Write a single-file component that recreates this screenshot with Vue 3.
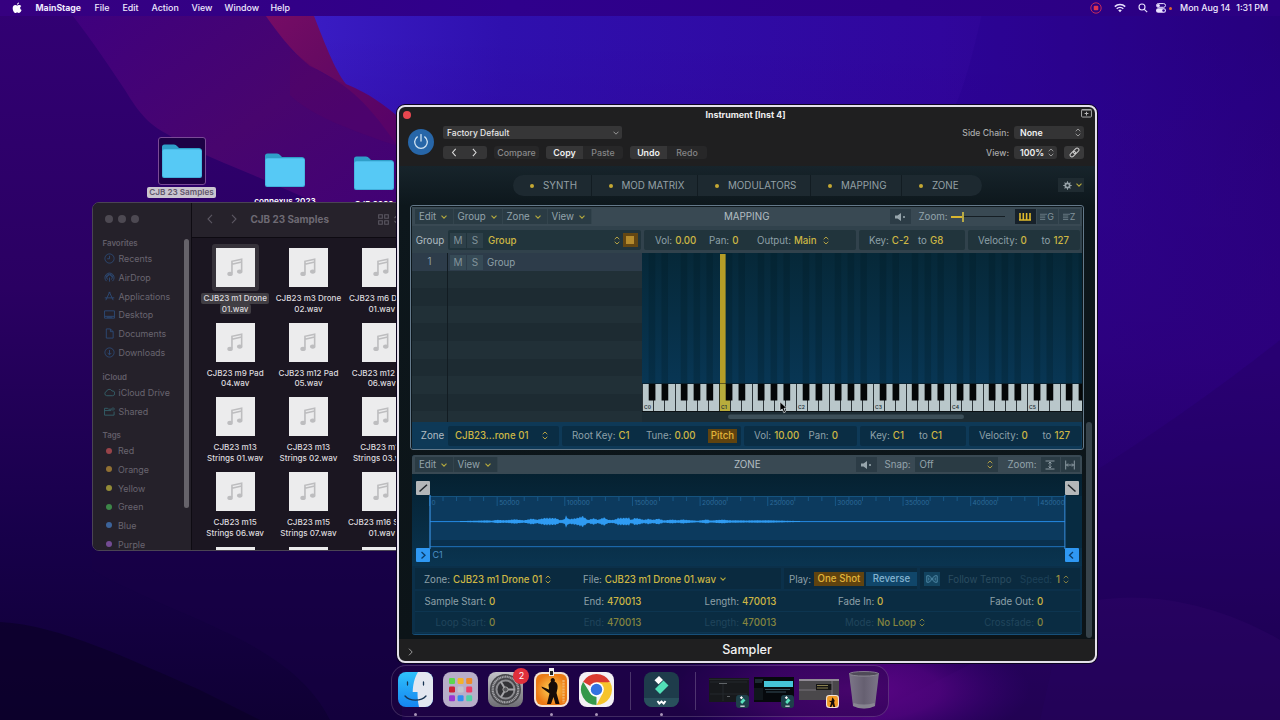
<template>
  <div class="desktop">
    <svg class="wallpaper" viewBox="0 0 1280 720" preserveAspectRatio="none">
      <defs>
        <linearGradient id="base" x1="0" y1="0" x2="0" y2="1">
          <stop offset="0" stop-color="#320074" />
          <stop offset=".4" stop-color="#2a0062" />
          <stop offset=".75" stop-color="#17004a" />
          <stop offset="1" stop-color="#0f0034" />
        </linearGradient>
        <linearGradient id="right" x1="0" y1="0" x2="1" y2="0">
          <stop offset="0" stop-color="#3a1cc4" />
          <stop offset=".2" stop-color="#2f10ae" />
          <stop offset=".65" stop-color="#30069c" />
          <stop offset="1" stop-color="#280078" />
        </linearGradient>
        <linearGradient id="fade" x1="0" y1="0" x2="0" y2="1">
          <stop offset=".05" stop-color="#2e0090" stop-opacity="0" />
          <stop offset=".5" stop-color="#2c007c" stop-opacity=".85" />
          <stop offset="1" stop-color="#1a0048" />
        </linearGradient>
        <linearGradient id="band" x1="0" y1="0" x2="1" y2="1">
          <stop offset="0" stop-color="#3e0080" />
          <stop offset=".5" stop-color="#48056e" />
          <stop offset="1" stop-color="#3f0078" />
        </linearGradient>
        <linearGradient id="red" x1="0" y1="0" x2="1" y2="1">
          <stop offset="0" stop-color="#7a0c66" />
          <stop offset=".4" stop-color="#680a62" />
          <stop offset="1" stop-color="#52026c" />
        </linearGradient>
        <radialGradient id="glow" cx=".5" cy=".5" r=".5">
          <stop offset="0" stop-color="#5e0588" />
          <stop offset=".5" stop-color="#520480" stop-opacity=".8" />
          <stop offset="1" stop-color="#3c0078" stop-opacity="0" />
        </radialGradient>
      </defs>
      <rect width="1280" height="720" fill="url(#base)" />
      <path d="M60 0C85 30 105 60 125 90C140 115 150 125 167 134C200 155 230 165 260 178C300 196 340 210 420 260V0Z" fill="url(#band)" />
      <path d="M255 0C275 30 290 50 310 66C350 85 370 105 400 150V0Z" fill="url(#red)" />
      <path d="M290 95C310 115 350 130 400 147V115C380 100 365 90 345 84C320 75 305 60 290 50Z" fill="#5c0464" opacity=".3" />
      <path d="M308 0C325 45 335 70 346 84C370 94 385 105 402 120V720H1280V0Z" fill="url(#right)" />
      <path d="M308 0C325 45 335 70 346 84C370 94 385 105 402 120V720H1280V0Z" fill="url(#fade)" />
      <path d="M985 0C970 70 960 100 948 120H1280V0Z" fill="#25008a" opacity=".3" />
      <path d="M1097 470C1160 430 1230 380 1280 340V720H1040Z" fill="#22005e" opacity=".3" />
      <path d="M1097 600C1160 590 1230 610 1280 640V720H860Z" fill="#34056c" opacity=".3" />
      <path d="M92 550H397V662H900L860 720H330C290 640 180 620 92 570Z" fill="#180046" opacity=".5" />
      <path d="M0 622C60 625 130 660 200 690L260 720H0Z" fill="#0b0028" opacity=".7" />
      <ellipse cx="850" cy="690" rx="180" ry="62" fill="url(#glow)" />
    </svg>

    <header class="menubar">
      <svg class="apple" viewBox="0 0 20 24"><path fill="#fff" d="M14 1c.2 2-1.700 4.600-4 4.500C9.700 3.400 12 1.200 14 1zM10.300 7c1 0 2.300-1.200 4.300-1.200 1.300 0 3 .8 3.900 2.200-3.300 2-2.900 6.600.6 8.200-.8 2.400-2.700 5.800-4.900 5.800-1.500 0-1.900-.9-3.700-.9s-2.400.9-3.700.9C4.400 22 1.400 17 1.400 12.400c0-4.100 2.600-6.400 5.100-6.400 1.700 0 2.900 1 3.800 1z" /></svg>
      <b class="m-app">MainStage</b>
      <span class="m-file">File</span>
      <span class="m-edit">Edit</span>
      <span class="m-action">Action</span>
      <span class="m-view">View</span>
      <span class="m-window">Window</span>
      <span class="m-help">Help</span>
      <div class="status">
        <svg class="rec" viewBox="0 0 12 12"><circle cx="6" cy="6" r="5.200" fill="none" stroke="#c22a5c" stroke-width="1" /><rect x="3.700" y="3.700" width="4.600" height="4.600" rx="1" fill="#e0344f" /></svg>
        <svg class="wifi" viewBox="0 0 12 10"><g fill="none" stroke="#e9e2ff" stroke-width="1.500"><path d="M.8 3.600C3.700.7 8.300.7 11.200 3.600" /><path d="M2.700 5.800c1.900-1.800 4.700-1.800 6.600 0" /></g><path d="M4.200 7.300c1-1 2.600-1 3.600 0L6 9.200z" fill="#e9e2ff" /></svg>
        <svg class="search" viewBox="0 0 10 10"><circle cx="4" cy="4" r="3" fill="none" stroke="#e9e2ff" stroke-width="1.100" /><path d="M6.300 6.300L9.200 9.200" stroke="#e9e2ff" stroke-width="1.200" /></svg>
        <svg class="control" viewBox="0 0 10 10"><rect x=".5" y=".6" width="9" height="3.700" rx="1.850" fill="none" stroke="#e9e2ff" /><circle cx="2.400" cy="2.400" r="1.500" fill="#e9e2ff" /><rect x="0" y="5.300" width="10" height="4.500" rx="2.200" fill="#e9e2ff" /><circle cx="7.600" cy="7.500" r="1.300" fill="#2d0090" /></svg>
        <i class="orange-dot"></i>
        <span class="date">Mon Aug 14</span>
        <span>1:31 PM</span>
      </div>
    </header>

    <div v-for="f in folders" :key="f.name" class="folder" :class="f.cls">
      <div class="folder-box">
        <svg viewBox="0 0 40 34">
          <path d="M0 3Q0 .5 2.500.5H12Q14 .5 15 2L17 4H37Q39.500 4 39.500 6.500V12H0Z" fill="#2f9fc9" />
          <rect x="0" y="5" width="40" height="29" rx="2" fill="#42aedb" />
          <rect x=".7" y="5.500" width="38.600" height="27.500" rx="1.800" fill="#56c9f5" />
        </svg>
      </div>
      <span>{{ f.name }}</span>
    </div>

    <section class="finder">
      <aside>
        <div class="lights"><i></i><i></i><i></i></div>
        <div v-for="s in sidebar" :key="s.title" class="side-group">
          <h4>{{ s.title }}</h4>
          <div v-for="item in s.items" :key="item.name" class="side-item">
            <svg v-if="item.icon" viewBox="0 0 12 12" :class="{ teal: s.title === 'iCloud' }"><path :d="item.icon" /></svg>
            <i v-else :class="'tag-' + item.name.toLowerCase()"></i>
            <span>{{ item.name }}</span>
          </div>
        </div>
        <div class="side-scroll"></div>
      </aside>
      <main>
        <div class="finder-bar">
          <svg class="nav" viewBox="0 0 32 10"><path d="M5 .8L1 5l4 4.200M25 .8L29 5l-4 4.200" /></svg>
          <b>CJB 23 Samples</b>
          <svg class="grid4" viewBox="0 0 11 11"><path d="M.7.700H4.300V4.300H.7zM6.700.700H10.300V4.300H6.700zM.7 6.700H4.300V10.300H.7zM6.700 6.700H10.300V10.300H6.700z" /></svg>
          <svg class="sort" viewBox="0 0 5 9"><path d="M.5 3L2.500 1 4.500 3M.5 6L2.500 8 4.500 6" /></svg>
        </div>
        <div class="files">
          <div v-for="(f, i) in files" :key="i" class="file" :class="{ picked: i === 0 }">
            <div class="sheet">
              <svg viewBox="0 0 18 20"><path fill="none" stroke="#bdbdbf" stroke-width="1.700" d="M5.800 16V3.500L16 1.200V13.500M5.800 6.600L16 4.300" /><ellipse cx="3.800" cy="16.800" rx="2.900" ry="2.200" fill="#bdbdbf" /><ellipse cx="14" cy="14.300" rx="2.900" ry="2.200" fill="#bdbdbf" /></svg>
            </div>
            <p><span>{{ f[0] }}</span><span>{{ f[1] }}</span></p>
          </div>
        </div>
      </main>
    </section>

    <section class="plugin">
      <div class="titlebar">
        <i class="close"></i>
        <b>Instrument [Inst 4]</b>
        <svg viewBox="0 0 12 10"><rect x=".6" y="1.600" width="10.800" height="7.800" rx="1" fill="none" stroke="#b5b5b5" /><path d="M.6 1.500H11.400M6 3.500V7.700M3.900 5.600H8.100" stroke="#b5b5b5" stroke-width="1.100" /></svg>
      </div>
      <div class="controls">
        <div class="power"><svg viewBox="0 0 16 16"><path d="M4.300 2.900a6.300 6.300 0 1 0 7.400 0M8 .6V7" /></svg></div>
        <div class="ctl-left">
          <div class="preset"><span>Factory Default</span><svg class="down" viewBox="0 0 6 4"><path d="M.5.700L3 3.200 5.500.700" /></svg></div>
          <div class="ctl-row">
            <div class="btn arrows"><svg viewBox="0 0 29 10"><path d="M4.700 1L1.200 5l3.500 4M23.800 1L27.300 5l-3.500 4" /></svg></div>
            <div class="btn dim compare">Compare</div>
            <div class="btn pair-btn"><b>Copy</b><span>Paste</span></div>
            <div class="btn pair-btn"><b>Undo</b><span>Redo</span></div>
          </div>
        </div>
        <div class="ctl-right">
          <div><label>Side Chain:</label><div class="sel none"><span>None</span><svg class="ud" viewBox="0 0 6 9"><path :d="updown" /></svg></div></div>
          <div>
            <label>View:</label><div class="sel pct"><span>100%</span><svg class="ud" viewBox="0 0 6 9"><path :d="updown" /></svg></div>
            <div class="link"><svg viewBox="0 0 12 12"><g transform="rotate(-45 6 6)" fill="none" stroke="#ccc" stroke-width="1.100"><rect x="0" y="4" width="7" height="4" rx="2" /><rect x="5" y="4" width="7" height="4" rx="2" /></g></svg></div>
          </div>
        </div>
      </div>

      <div class="body">
        <div class="tabs-row">
          <div class="tabs">
            <div v-for="t in tabs" :key="t" :class="'tab-' + t.split(' ').pop().toLowerCase()"><i></i><span>{{ t }}</span></div>
          </div>
          <div class="gear">
            <svg class="cog" viewBox="0 0 10 10"><circle cx="5" cy="5" r="2.400" fill="none" stroke="#97a3a8" stroke-width="1.900" /><path d="M5 .3V3M5 7V9.700M.3 5H3M7 5H9.700M1.700 1.700L3.500 3.500M6.500 6.500L8.300 8.300M8.300 1.700L6.500 3.500M3.500 6.500L1.700 8.300" stroke="#97a3a8" stroke-width="1.200" /></svg>
            <svg class="chev" viewBox="0 0 6 4"><path :d="chevron" /></svg>
          </div>
        </div>

        <div class="panels">
          <div class="mapping">
            <div class="toolbar">
              <div v-for="m in ['Edit', 'Group', 'Zone', 'View']" :key="m" class="menu" :class="'w-' + m.toLowerCase()">{{ m }}<svg class="chev" viewBox="0 0 6 4"><path :d="chevron" /></svg></div>
              <h3 class="map-title">MAPPING</h3>
              <div class="speaker"><svg viewBox="0 0 11 8"><path d="M0 2.500H2.500L6 0V8L2.500 5.500H0z" /><circle cx="9" cy="4" r="1.100" /></svg></div>
              <span class="zoom-label">Zoom:</span>
              <div class="slider"><i></i><b></b></div>
              <div class="views">
                <div class="on"><svg viewBox="0 0 12 8"><path d="M1 0V7.500M4.300 0V7.500M7.600 0V7.500M11 0V7.500M0 7H12" stroke="#e0bb2c" stroke-width="1.600" /></svg></div>
                <div><svg viewBox="0 0 8 8"><path d="M0 .8H8M0 2.800H6M0 4.800H6M0 6.800H6" /></svg><span>G</span></div>
                <div><svg viewBox="0 0 8 8"><path d="M0 .8H8M0 2.800H6M0 4.800H6M0 6.800H6" /></svg><span>Z</span></div>
              </div>
            </div>
            <div class="strip group-strip">
              <label>Group</label>
              <div class="box box-name"><i class="ms">M</i><i class="ms">S</i><em>Group</em><svg class="ud gold" viewBox="0 0 6 9"><path :d="updown" /></svg><span class="color"><i></i></span></div>
              <div class="box box-vol"><span>Vol: <em>0.00</em></span><span>Pan: <em>0</em></span><span>Output: <em>Main</em><svg class="ud gold" viewBox="0 0 6 9"><path :d="updown" /></svg></span></div>
              <div class="box box-key"><span>Key: <em>C-2</em></span><span>to <em>G8</em></span></div>
              <div class="box box-vel"><span>Velocity: <em>0</em></span><span>to <em>127</em></span></div>
            </div>
            <div class="map-body">
              <div class="list">
                <div class="row first"><span>1</span><div><i class="ms">M</i><i class="ms">S</i>Group</div></div>
                <div v-for="n in 9" :key="n" class="row"><span></span><div></div></div>
              </div>
              <svg class="roll" viewBox="0 0 440 169">
                <defs>
                  <linearGradient id="roll" x1="0" y1="0" x2="0" y2="1">
                    <stop offset="0" stop-color="#062838" />
                    <stop offset="1" stop-color="#083654" />
                  </linearGradient>
                </defs>
                <rect width="440" height="131" fill="url(#roll)" />
                <rect v-for="(x, i) in blacks" :key="'s' + i" :x="x" y="0" width="6.400" height="131" fill="#021722" opacity=".24" />
                <rect x="78" y="1" width="5.600" height="130" fill="#b59d27" />
                <rect y="130.500" width="440" height="29" fill="#0b1114" />
                <rect v-for="n in 40" :key="'w' + n" :x="(n - 1) * 11 + .8" y="131" width="10.200" height="27" :fill="n === 8 ? '#b8ac3c' : '#b9c7ca'" />
                <rect v-for="(x, i) in blacks" :key="'b' + i" :x="x" y="131" width="6.700" height="16.500" fill="#050708" />
                <text v-for="n in 6" :key="'t' + n" :x="(n - 1) * 77 + 2" y="156.300">C{{ n - 1 }}</text>
                <rect y="159" width="440" height="10" fill="#1c2c34" />
                <rect x="86" y="161.500" width="236" height="4.500" rx="2.200" fill="#3c4f59" />
              </svg>
            </div>
            <div class="strip zone-strip">
              <label>Zone</label>
              <div class="box box-zone"><em>CJB23...rone 01</em><svg class="ud gold" viewBox="0 0 6 9"><path :d="updown" /></svg></div>
              <div class="box box-root"><span>Root Key: <em>C1</em></span><span>Tune: <em>0.00</em></span><b class="amber">Pitch</b></div>
              <div class="box box-zvol"><span>Vol: <em>10.00</em></span><span>Pan: <em>0</em></span></div>
              <div class="box box-key"><span>Key: <em>C1</em></span><span>to <em>C1</em></span></div>
              <div class="box box-vel"><span>Velocity: <em>0</em></span><span>to <em>127</em></span></div>
            </div>
          </div>

          <div class="zone">
            <div class="toolbar">
              <div v-for="m in ['Edit', 'View']" :key="m" class="menu" :class="'w-' + m.toLowerCase()">{{ m }}<svg class="chev" viewBox="0 0 6 4"><path :d="chevron" /></svg></div>
              <h3 class="zone-title">ZONE</h3>
              <div class="speaker"><svg viewBox="0 0 11 8"><path d="M0 2.500H2.500L6 0V8L2.500 5.500H0z" /><circle cx="9" cy="4" r="1.100" /></svg></div>
              <span class="snap-label">Snap:</span>
              <div class="snap">Off<svg class="ud gold" viewBox="0 0 6 9"><path :d="updown" /></svg></div>
              <span class="zoom-label2">Zoom:</span>
              <div class="fits">
                <div><svg viewBox="0 0 10 10"><path d="M.5 1H9.500M.5 9H9.500M5 2V8M3.500 3.500L5 2 6.500 3.500M3.500 6.500L5 8 6.500 6.500" /></svg></div>
                <div><svg viewBox="0 0 10 10"><path d="M.7 .5V9.500M9.300 .5V9.500M1.500 5H8.500M3 3.500L1.500 5 3 6.500M7 3.500L8.500 5 7 6.500" /></svg></div>
              </div>
            </div>
            <svg class="wave" viewBox="412 474 670 92">
              <defs>
                <linearGradient id="waveBg" x1="0" y1="0" x2="0" y2="1">
                  <stop offset="0" stop-color="#052131" />
                  <stop offset="1" stop-color="#0a3450" />
                </linearGradient>
              </defs>
              <rect x="412" y="474" width="670" height="92" fill="url(#waveBg)" />
              <rect x="430" y="496" width="635" height="51" fill="#0c3a5e" />
              <rect x="430" y="540" width="635" height="6" fill="#09304d" />
              <rect x="430" y="496" width="635" height="1" fill="#15537f" />
              <rect x="430" y="546" width="635" height="1.200" fill="#1b67a8" />
              <path v-for="n in 47" :key="n" :d="`M${429.500 + (n - 1) * 13.530} 497v${(n - 1) % 5 ? 4 : 9}`" stroke="#1b5f92" stroke-width=".8" />
              <text v-for="n in 10" :key="'r' + n" :x="431.500 + (n - 1) * 67.640" y="504.800" class="tick">{{ (n - 1) * 50000 }}</text>
              <rect x="430" y="521" width="635" height="1.100" fill="#2181d6" />
              <path :d="wavePath" fill="#2f9bf2" />
              <path d="M430 495V549M1065 495V549" stroke="#3a8fe0" stroke-width="1.200" />
              <rect x="1065.600" y="496" width="16.400" height="52" fill="#072b41" />
              <rect x="416" y="481" width="14" height="14" rx="1" fill="#b4b7b9" />
              <path d="M419.500 491.500L427 484.800" stroke="#20262a" stroke-width="1.500" />
              <rect x="1065" y="481" width="14" height="14" rx="1" fill="#b4b7b9" />
              <path d="M1068 484.800L1075.500 491.500" stroke="#20262a" stroke-width="1.500" />
              <rect x="416" y="548" width="14" height="14" rx="1" fill="#2f98f3" />
              <path d="M421.500 552L425 555.200L421.500 558.500" fill="none" stroke="#0b3c68" stroke-width="1.300" />
              <rect x="1065" y="548" width="14" height="14" rx="1" fill="#2f98f3" />
              <path d="M1073 552L1069.500 555.200L1073 558.500" fill="none" stroke="#0b3c68" stroke-width="1.300" />
              <text x="432.500" y="558.300" class="c1">C1</text>
            </svg>
            <div class="params">
              <div class="prow prow-zone">
                <div class="pbox pbox-file">
                  <span>Zone: <em>CJB23 m1 Drone 01</em><svg class="ud gold" viewBox="0 0 6 9"><path :d="updown" /></svg></span>
                  <span>File: <em>CJB23 m1 Drone 01.wav</em><svg class="chev" viewBox="0 0 6 4"><path :d="chevron" /></svg></span>
                </div>
                <div class="pbox pbox-play"><span>Play:</span><b class="amber">One Shot</b><b class="reverse">Reverse</b></div>
                <div class="pbox pbox-tempo">
                  <div class="flex-icon"><svg viewBox="0 0 12 8"><path d="M.8 .8V7.200H3L5.200 5.400V2.600L3 .8ZM11.200 .8V7.200H9L6.800 5.400V2.600L9 .8ZM5 4H7M2.800 2.500V5.500M9.200 2.500V5.500" /></svg></div>
                  <span class="follow">Follow Tempo</span><span class="speed">Speed:</span><em>1</em><svg class="ud gold" viewBox="0 0 6 9"><path :d="updown" /></svg>
                </div>
              </div>
              <div class="prow vals">
                <label>Sample Start:</label><em>0</em><label>End:</label><em>470013</em><label>Length:</label><em>470013</em><label>Fade In:</label><em>0</em><label>Fade Out:</label><em>0</em>
              </div>
              <div class="prow vals off">
                <label>Loop Start:</label><em>0</em><label>End:</label><em>470013</em><label>Length:</label><em>470013</em><label>Mode:</label><em>No Loop<svg class="ud gold" viewBox="0 0 6 9"><path :d="updown" /></svg></em><label>Crossfade:</label><em>0</em>
              </div>
            </div>
          </div>
        </div>
        <div class="body-scroll"></div>
      </div>
      <footer>
        <svg viewBox="0 0 5 8"><path d="M1 .7L4.200 4 1 7.300" /></svg>
        <b>Sampler</b>
      </footer>
    </section>

    <div class="dock">
      <div class="app running">
        <svg viewBox="0 0 35 35">
          <defs>
            <linearGradient id="fb" x1="0" y1="0" x2="0" y2="1"><stop offset="0" stop-color="#2fc1fb" /><stop offset="1" stop-color="#1585f0" /></linearGradient>
            <linearGradient id="grey" x1="0" y1="0" x2="0" y2="1"><stop offset="0" stop-color="#c4c4c8" /><stop offset="1" stop-color="#6e6e74" /></linearGradient>
            <radialGradient id="ms"><stop offset="0" stop-color="#ffd65a" /><stop offset="1" stop-color="#ec7a14" /></radialGradient>
            <clipPath id="sq"><rect width="35" height="35" rx="8" /></clipPath>
            <linearGradient id="bin" x1="0" y1="0" x2="1" y2="0"><stop offset="0" stop-color="#83838c" /><stop offset=".5" stop-color="#6a6a72" /><stop offset="1" stop-color="#83838c" /></linearGradient>
          </defs>
          <g clip-path="url(#sq)">
            <rect width="35" height="35" fill="url(#fb)" />
            <path d="M20 0C16 7 15 13 14.700 20H19.500C19.500 26 20 31 21 35H35V0Z" fill="#e3e7f0" />
            <path d="M7 24C12 29.500 23 29.500 28 24M9.500 10V13M25.500 10V13" fill="none" stroke="#173452" stroke-width="1.300" stroke-linecap="round" />
          </g>
        </svg>
      </div>
      <div class="app">
        <svg viewBox="0 0 35 35"><rect width="35" height="35" rx="8" fill="#b8aec9" />
          <rect v-for="(c, i) in padColors" :key="i" :x="6 + (i % 3) * 8.600" :y="6 + Math.floor(i / 3) * 8.600" width="6" height="6" rx="1.300" :fill="c" /></svg>
      </div>
      <div class="app">
        <svg viewBox="0 0 35 35"><rect width="35" height="35" rx="8" fill="url(#grey)" />
          <circle cx="17.500" cy="17.500" r="15.500" fill="#47474b" /><circle cx="17.500" cy="17.500" r="12.800" fill="none" stroke="#a4a4a8" stroke-width="2.200" stroke-dasharray="1.200 .5" /><circle cx="17.500" cy="17.500" r="9" fill="#333337" stroke="#8c8c90" stroke-width="2" />
          <path d="M17.500 17.500H27M17.500 17.500L12.800 9.400M17.500 17.500L12.800 25.600" stroke="#a4a4a8" stroke-width="2" /><circle cx="17.500" cy="17.500" r="2.600" fill="#57575b" stroke="#aaa" /></svg>
        <span class="badge">2</span>
      </div>
      <div class="app running">
        <svg viewBox="0 0 35 35"><rect width="35" height="35" rx="8" fill="#f3e3d6" /><rect x="2" y="2" width="31" height="31" rx="6" fill="url(#ms)" />
          <path d="M18.500 6a2.300 2.300 0 0 1 2 3.600C23 10.500 24 13 23.500 16.500L22.500 21 25.500 32H21.500L19.500 25 17 32H13L15.500 21.500 8 16 7.500 14.500 15 17.500 14.500 12.500 17 9.500A2.300 2.300 0 0 1 18.500 6z" fill="#160c08" />
          <path d="M29.500 8V31" stroke="#f3b060" stroke-width="2.400" stroke-dasharray="2 .8" /></svg>
        <span class="tip"></span>
      </div>
      <div class="app running">
        <svg viewBox="0 0 35 35"><rect width="35" height="35" rx="8" fill="#f4f1f5" />
          <path d="M17.500 17.500L4.100 9.700A15.500 15.500 0 0 1 30.900 9.700Z" fill="#d93a30" /><path d="M4.100 9.700L11.300 21.200L17.500 24.700L17.500 33A15.500 15.500 0 0 1 4.100 9.700Z" fill="#35984b" />
          <path d="M17.500 10.300H31.200A15.500 15.500 0 0 1 17.500 33L23.800 21Z" fill="#f6c42c" />
          <circle cx="17.500" cy="17.500" r="7.300" fill="#fff" /><circle cx="17.500" cy="17.500" r="5.700" fill="#3472e0" /></svg>
      </div>
      <i class="sep"></i>
      <div class="app running">
        <svg viewBox="0 0 35 35"><rect width="35" height="35" rx="8" fill="#1e3c4b" /><path d="M0 26H35V27A8 8 0 0 1 27 35H8A8 8 0 0 1 0 27Z" fill="#29505c" />
          <path d="M15 4L19 8 14.500 12.300 10.500 8.300Z" fill="#fff" /><path d="M19.500 8.500L24.500 13.500 16 22 11 17Z" fill="#52e0b8" /><path d="M13.500 29L15.300 31.500 17.500 29.500 19.700 31.500 21.500 29" fill="none" stroke="#fff" stroke-width="2" /></svg>
      </div>
      <i class="sep"></i>
      <div class="thumb">
        <svg viewBox="0 0 40 32"><rect y="4" width="40" height="24" fill="#17191c" /><path d="M0 5.500H40M1 8H38M14 10V27M1 20H38" stroke="#25292c" /><path d="M10 9.500h8M18 22.500h3" stroke="#80858a" stroke-width=".7" /></svg>
        <svg class="mini" viewBox="0 0 12 12"><rect width="12" height="12" rx="3" fill="#1e404b" /><path d="M5 1L6.500 2.500 5 4 3.500 2.500Z" fill="#fff" /><path d="M6.700 3L8.700 5 5.700 8.200 3.900 6.400Z" fill="#59e0bd" /><path d="M4 10.300H8" stroke="#fff" /></svg>
      </div>
      <div class="thumb">
        <svg viewBox="0 0 40 32"><rect y="3" width="40" height="25" fill="#06090d" /><rect x="10" y="7" width="29" height="6" fill="#45c4d8" /><path d="M1 6H9M1 8H8M11 15.500H36M12 18H32" stroke="#344d58" /><path d="M0 14H9V26H0z" fill="#10171c" /></svg>
        <svg class="mini" viewBox="0 0 12 12"><rect width="12" height="12" rx="3" fill="#1e404b" /><path d="M5 1L6.500 2.500 5 4 3.500 2.500Z" fill="#fff" /><path d="M6.700 3L8.700 5 5.700 8.200 3.900 6.400Z" fill="#59e0bd" /><path d="M4 10.300H8" stroke="#fff" /></svg>
      </div>
      <div class="thumb">
        <svg viewBox="0 0 40 32"><rect y="5" width="40" height="21" fill="#4a484b" /><rect y="5" width="40" height="2" fill="#918b95" /><rect x="17" y="10" width="16" height="6" fill="#151515" /><path d="M18 11.500H29M18 14H29" stroke="#8a8050" /><path d="M33 7V26M0 16H17" stroke="#77737a" /></svg>
        <svg class="mini" viewBox="0 0 12 12"><rect width="12" height="12" rx="3" fill="#f3e3d6" /><rect x="1" y="1" width="10" height="10" rx="2" fill="#f09a25" /><path d="M6 2L8 5 7.500 7 8.500 11H6.800L6 8.500 5 11H3.500L4.800 7 2.500 5.200 5 5.500z" fill="#160c08" /></svg>
      </div>
      <div class="trash">
        <svg viewBox="0 0 30 38"><path d="M0 2L4 35Q15 40 26 35L30 2Z" fill="url(#bin)" opacity=".9" /><ellipse cx="15" cy="2.800" rx="14.500" ry="2.300" fill="#4f4a58" stroke="#94929c" stroke-width=".8" /><path d="M4 35Q15 40 26 35L25.500 32Q15 35 4.500 32Z" fill="#9a9aa2" opacity=".6" /></svg>
      </div>
    </div>

    <svg class="cursor" viewBox="0 0 9 13"><path d="M1 .8V9.800L3.200 7.900 4.800 11.800 6.500 11 5 7.300H8Z" fill="#000" stroke="#dfe5e8" stroke-width=".7" /></svg>
  </div>
</template>

<script setup>
import { ref, computed } from 'vue';

const updown = 'M.7 3.200L3 1 5.300 3.200M.7 5.800L3 8 5.300 5.800';
const chevron = 'M.5.600L3 3.200 5.500.600';

const folders = ref([
  { name: 'CJB 23 Samples', cls: 'folder-one' },
  { name: 'connexus 2023', cls: 'folder-two' },
  { name: 'CJB 2023', cls: 'folder-three' },
]);

const sidebar = ref([
  {
    title: 'Favorites',
    items: [
      { name: 'Recents', icon: 'M6 1a5 5 0 1 0 .01 0M6 3V6.300H3.500' },
      { name: 'AirDrop', icon: 'M2.800 10A5 5 0 1 1 9.200 10M4 8.300A2.900 2.900 0 1 1 8 8.300M6 6V10.500M2.500 6A3.500 3.500 0 0 1 9.500 6' },
      { name: 'Applications', icon: 'M6 1.500L2 10M6 1.500L10 10M.8 7.500H11.200M5 1.500H7' },
      { name: 'Desktop', icon: 'M.6 2H11.400V10H.6ZM.6 8H11.400M3 9H9' },
      { name: 'Documents', icon: 'M2.500 1H7L10 4V11H2.500ZM7 1V4H10' },
      { name: 'Downloads', icon: 'M6 1a5 5 0 1 0 .01 0M6 3.300V8.300M4 6.500L6 8.500 8 6.500' },
    ],
  },
  {
    title: 'iCloud',
    items: [
      { name: 'iCloud Drive', icon: 'M3 9.500A2.300 2.300 0 0 1 2.600 5A3.300 3.300 0 0 1 8.700 4.300A2.600 2.600 0 0 1 9.500 9.500Z' },
      { name: 'Shared', icon: 'M.6 2.500H4L5 3.500H8M.6 2.500V10H11V6M.6 5H8M9.800 2a1.300 1.300 0 1 0 .01 0' },
    ],
  },
  {
    title: 'Tags',
    items: ['Red', 'Orange', 'Yellow', 'Green', 'Blue', 'Purple'].map((name) => ({ name })),
  },
]);

const files = ref([
  ['CJB23 m1 Drone', '01.wav'],
  ['CJB23 m3 Drone', '02.wav'],
  ['CJB23 m6 Drone', '01.wav'],
  ['CJB23 m9 Pad', '04.wav'],
  ['CJB23 m12 Pad', '05.wav'],
  ['CJB23 m12 Pad', '06.wav'],
  ['CJB23 m13', 'Strings 01.wav'],
  ['CJB23 m13', 'Strings 02.wav'],
  ['CJB23 m13', 'Strings 03.wav'],
  ['CJB23 m15', 'Strings 06.wav'],
  ['CJB23 m15', 'Strings 07.wav'],
  ['CJB23 m16 Synth', '01.wav'],
  ['', ''],
  ['', ''],
  ['', ''],
]);

const tabs = ['SYNTH', 'MOD MATRIX', 'MODULATORS', 'MAPPING', 'ZONE'];
const padColors = ['#5bd64f', '#f2b32c', '#ee8a2a', '#cc2136', '#c3c3cb', '#ee3d68', '#9a36d0', '#2f8df0', '#4fd2a8'];

// x of every sharp key, octave = 77px
const blacks = computed(() => {
  const list = [];
  for (let o = 0; o < 6; o++) {
    [1, 3, 6, 8, 10].forEach((s) => list.push(o * 77 + s * 6.417 + 0.3));
  }
  return list.filter((x) => x < 440);
});

// loudness of the sample: [x, half height]
const envelope = [
  [460, 0.2], [475, 0.5], [487, 1], [492, 0.6], [497, 1.6], [505, 1], [515, 2.2], [524, 1], [532, 3], [537, 1.8],
  [545, 3.8], [556, 3.6], [560, 1.2], [564, 2], [566, 6], [569, 2.4], [576, 3.4], [583, 5.8], [586, 3], [588, 1.4], [594, 3.4],
  [598, 1.6], [604, 4.4], [608, 1.6], [614, 1.4], [618, 3.6], [629, 4], [631, 1.4], [635, 3.8], [640, 2.8], [644, 1.4], [648, 2.8],
  [653, 1.6], [658, 3], [664, 1], [672, 1.8], [678, 1.2], [683, 2], [690, 1.2], [698, 0.5], [707, 2], [711, 0.8], [722, 1.8],
  [732, 1], [750, 0.9], [768, 1.1], [785, 0.5], [800, 0.2],
];

const wavePath = computed(() => {
  const top = [];
  const bottom = [];
  for (let x = 460; x <= 800; x += 1) {
    const i = envelope.findIndex((p) => p[0] >= x);
    const b = envelope[i];
    const a = envelope[Math.max(0, i - 1)];
    const t = b[0] === a[0] ? 0 : (x - a[0]) / (b[0] - a[0]);
    const noise = 0.8 + 0.2 * Math.sin(x * 2.3);
    const h = (a[1] + (b[1] - a[1]) * t) * noise + 0.3;
    top.push(`${x} ${(521.5 - h).toFixed(2)}`);
    bottom.unshift(`${x} ${(521.5 + h).toFixed(2)}`);
  }
  return `M${top.join('L')}L${bottom.join('L')}Z`;
});
</script>

<style>
body {
  overflow: hidden;
}
</style>

<style scoped>
* {
  box-sizing: border-box;
}

.desktop {
  position: relative;
  width: 1280px;
  height: 720px;
  overflow: hidden;
  font-family: Inter, "Liberation Sans", sans-serif;
  font-size: 9px;
  white-space: nowrap;
}

svg {
  display: block;
  flex: none;
}

i, em {
  font-style: normal;
}

.wallpaper {
  position: absolute;
  inset: 0;
  width: 1280px;
  height: 720px;
}

/* menu bar */
.menubar {
  position: absolute;
  top: 0;
  left: 0;
  width: 1280px;
  height: 16px;
  display: flex;
  align-items: center;
  padding: 0 0 1px 12px;
  background: linear-gradient(90deg, #360080, #2f008c 40%, #2b0082);
  color: #f0eaff;
  font-size: 8.9px;
  font-weight: 500;
}

.apple { width: 10px; height: 12px; margin-right: 13.5px; }
.m-app { width: 59px; font-size: 8.7px; font-weight: 700; }
.m-file { width: 28px; }
.m-edit { width: 29px; }
.m-action { width: 40px; }
.m-view { width: 33px; }
.m-window { width: 46px; }

.status {
  margin-left: auto;
  display: flex;
  align-items: center;
  padding-right: 12px;
}

.rec { width: 12px; height: 12px; margin-right: 12px; }
.wifi { width: 12px; height: 10px; margin-right: 12px; }
.search { width: 10px; height: 10px; margin-right: 8px; }
.control { width: 10px; height: 10px; }
.orange-dot { width: 3px; height: 3px; border-radius: 50%; background: #e0662c; margin: 2px 8px 0 3px; }
.date { margin-right: 6px; }

/* desktop folders */
.folder {
  position: absolute;
  display: flex;
  flex-direction: column;
  align-items: center;
  width: 90px;
  color: #fff;
  font-size: 8.2px;
  font-weight: 600;
}

.folder-box {
  width: 48px;
  height: 48px;
  padding: 6px 3px;
  border: 1px solid transparent;
  border-radius: 3px;
}

.folder-box svg { width: 40px; height: 34px; }
.folder span { margin-top: 1.500px; line-height: 11px; border-radius: 2px; padding: 0 2.500px; }
.folder-one { left: 136.500px; top: 137px; }
.folder-two { left: 240px; top: 146px; }
.folder-three { left: 329px; top: 149px; }
.folder-one .folder-box { background: #1d0145; border-color: #7a4b96; }
.folder-one span { background: #cbc6d0; color: #61566c; }

/* finder */
.finder {
  position: absolute;
  left: 92px;
  top: 202px;
  width: 340px;
  height: 349px;
  display: flex;
  border: 1px solid #4a4453;
  border-radius: 7px;
  overflow: hidden;
  background: #1b1621;
}

.finder aside {
  position: relative;
  width: 99px;
  background: #25212a;
  border-right: 1px solid #0e0b12;
  color: #696570;
  flex: none;
}

.lights { display: flex; gap: 5px; padding: 12px 0 0 12px; height: 34px; }
.lights i { width: 8px; height: 8px; border-radius: 50%; background: #4d4952; }
.side-group { height: 134px; }
.side-group:nth-child(3) { height: 58px; }
.side-group h4 { margin: 0; padding-left: 9.500px; font-size: 7.9px; font-weight: 600; line-height: 13px; color: #625e69; }
.side-item { display: flex; align-items: center; height: 18.66px; padding: 0 0 1px 11px; font-size: 8.9px; }
.side-item svg { width: 11px; height: 11px; margin-right: 3.500px; fill: none; stroke: #2d4a76; stroke-width: 1; }
.side-item svg.teal { stroke: #35606a; }
.side-item i { width: 6px; height: 6px; border-radius: 50%; margin: 0 6px 0 2px; }
.tag-red { background: #984349; }
.tag-orange { background: #917033; }
.tag-yellow { background: #938b37; }
.tag-green { background: #3d8648; }
.tag-blue { background: #3c639a; }
.tag-purple { background: #734b93; }

.side-scroll {
  position: absolute;
  left: 91px;
  top: 36px;
  width: 5px;
  height: 269px;
  border-radius: 3px;
  background: #66636a;
}

.finder-bar {
  display: flex;
  align-items: center;
  height: 35px;
  padding: 0 0 2px 15px;
  background: #26222b;
  border-bottom: 1px solid #0d0a11;
  color: #6e6a74;
}

.finder-bar svg { fill: none; stroke: #5b5762; stroke-width: 1.1; }
.finder-bar .nav { width: 32px; height: 10px; margin-right: 11.500px; }
.finder-bar b { width: 127px; font-size: 9.9px; font-weight: 700; }
.finder-bar .grid4 { width: 11px; height: 11px; margin-right: 5px; }
.finder-bar .sort { width: 5px; height: 9px; }

.files {
  display: grid;
  grid-template-columns: 73.3px 73.3px 73.3px;
  grid-auto-rows: 74.7px;
  padding: 6px 0 0 6.500px;
}

.file { display: flex; flex-direction: column; align-items: center; }
.sheet { width: 47px; height: 47px; padding: 4px; border-radius: 3px; }
.sheet svg { width: 39px; height: 39px; padding: 10px 11px 10px 10px; background: #ececed; }
.picked .sheet { background: #36323a; }
.file p { margin: 2px 0 0; color: #dddadf; font-size: 8.05px; font-weight: 500; display: flex; flex-direction: column; align-items: center; }
.file p span { line-height: 10.7px; padding: 0 2px; border-radius: 2px; }
.picked p span { background: #413e44; }

/* plugin window */
.plugin {
  position: absolute;
  left: 397px;
  top: 105px;
  width: 700px;
  height: 558px;
  border: 2px solid #e4e0ea;
  border-radius: 8px;
  overflow: hidden;
  background: #1f1f20;
  box-shadow: 0 0 0 1px #0b0320;
  display: flex;
  flex-direction: column;
}

.titlebar { display: flex; align-items: center; justify-content: space-between; height: 16px; padding: 0 3px 0 4px; color: #eee; }
.titlebar b { font-size: 8.8px; font-weight: 700; padding: 0 1px 1px 0; }
.titlebar .close { width: 8px; height: 8px; border-radius: 50%; background: #e8474f; }
.titlebar svg { width: 11px; height: 10px; margin-top: -4px; }

.controls { display: flex; height: 43px; padding: 3px 11px 0 9px; }
.power { width: 26px; height: 26px; border-radius: 50%; background: #2766a8; margin: 3px 9px 0 0; padding: 5px; }
.power svg { width: 16px; height: 16px; fill: none; stroke: #cfe2f2; stroke-width: 1.3; stroke-linecap: round; }
.ctl-left { display: flex; flex-direction: column; gap: 7px; }
.preset { display: flex; align-items: center; justify-content: space-between; width: 179px; height: 13px; padding: 0 3px 0 4px; border-radius: 2px; background: #363637; color: #e6e6e6; font-size: 8.5px; font-weight: 500; }
.down { width: 6px; height: 4px; fill: none; stroke: #999; }
.ctl-row { display: flex; gap: 7px; }
.btn { display: flex; align-items: center; justify-content: center; height: 13px; border-radius: 3px; background: #2c2c2d; font-size: 8.8px; }
.arrows { width: 44px; background: #353536; }
.arrows svg { width: 27px; height: 9px; fill: none; stroke: #dcdcdc; stroke-width: 1.2; margin-right: 1px; }
.dim { color: #8a8a8b; font-weight: 500; }
.compare { width: 45px; background: #272728; }
.pair-btn { width: 77px; background: #272728; overflow: hidden; }
.pair-btn b { width: 37px; line-height: 13px; text-align: center; background: #363637; color: #f0f0f0; font-weight: 600; }
.pair-btn span { width: 40px; text-align: center; color: #858586; font-weight: 500; }

.ctl-right { margin-left: auto; display: flex; flex-direction: column; gap: 7px; width: 125px; }
.ctl-right > div { display: flex; height: 13px; align-items: center; }
.ctl-right label { width: 50px; margin-right: 5px; color: #a9a9aa; font-size: 8.6px; font-weight: 500; display: flex; justify-content: flex-end; }
.sel { display: flex; align-items: center; justify-content: space-between; height: 13px; padding: 0 3px 0 6px; background: #343435; border-radius: 3px; color: #efefef; font-weight: 600; font-size: 8.8px; }
.none { width: 70px; }
.pct { width: 43px; margin-right: 7px; }
.ud { width: 6px; height: 9px; fill: none; stroke: #999; }
.ud.gold { stroke: #b6a244; }
.link { width: 20px; height: 13px; border-radius: 3px; background: #3a3a3b; padding: 1px 5px; }
.link svg { width: 11px; height: 11px; }

.body { position: relative; height: 473px; background: linear-gradient(#17242b, #0d171c 40px, #0c1418); font-size: 9.7px; color: #8da0a8; }

.tabs-row { display: flex; height: 39px; padding: 9px 0 0 114px; }
.tabs { display: flex; width: 469px; height: 21px; border-radius: 10.5px; overflow: hidden; background: #1d2930; color: #94a0a6; font-size: 9.8px; }
.tabs div { display: flex; align-items: center; border-right: 1px solid #121c22; padding-left: 17px; }
.tabs i { width: 4px; height: 4px; border-radius: 50%; background: #c5a833; margin-right: 9px; }
.tabs span { padding-bottom: 1px; }
.tab-synth { width: 78.5px; }
.tab-matrix { width: 106.500px; }
.tab-modulators { width: 113px; }
.tab-mapping { width: 91px; }
.tabs .tab-zone { width: 80px; border: 0; }
.gear { display: flex; align-items: center; width: 26px; height: 14px; margin: 3px 0 0 76px; padding-left: 5px; gap: 4px; background: #1f2b31; }
.cog { width: 9px; height: 9px; }
.chev { width: 6px; height: 4px; fill: none; stroke: #b3a83d; stroke-width: 1.1; }

.panels { padding: 0 0 0 11px; width: 686px; }

.mapping {
  width: 674px;
  height: 245px;
  border: 1px solid #64798a;
  border-radius: 3px;
  padding: 1px;
  background: #0d171c;
  overflow: hidden;
}

.toolbar { display: flex; align-items: center; height: 19px; background: #394953; color: #93a3ab; }
.menu { display: flex; align-items: center; gap: 5px; height: 15px; background: #2a3b44; padding-left: 4px; border-right: 1px solid #33444d; }
.mapping .menu:first-child { margin-left: 3px; }
.zone .menu:first-child { margin-left: 3px; }
.w-edit { width: 38.5px; }
.w-group { width: 49px; }
.w-zone { width: 45px; }
.w-view { width: 44px; }
.toolbar h3 { margin: 0; font-size: 9.8px; font-weight: 400; color: #b3bec3; }
.map-title { width: 298px; padding-left: 132.500px; }
.speaker { width: 21px; height: 15px; background: #2c3c46; display: flex; align-items: center; justify-content: center; }
.speaker svg { width: 11px; height: 8px; fill: #97a5ac; }
.zoom-label { margin-left: 8px; width: 32.5px; }
.slider { display: flex; align-items: center; width: 54px; height: 10px; background: linear-gradient(#151e24, #151e24) center / 100% 1px no-repeat; }
.slider i { width: 11px; height: 2px; background: #d9b62f; }
.slider b { width: 2px; height: 10px; background: #b7a946; }
.views { display: flex; margin-left: 9.500px; gap: 1px; }
.views div { width: 21px; height: 15px; background: #2d3e48; display: flex; align-items: center; justify-content: center; }
.views div.on { background: #17212a; }
.views svg { width: 7px; height: 8px; fill: none; stroke: #64767f; stroke-width: 1.300; }
.views .on svg { width: 12px; height: 8px; }
.views span { font-size: 9px; line-height: 13px; color: #82939b; }

.strip { display: flex; align-items: center; height: 27px; background: #31424c; padding-top: 1px; }
.strip label { width: 36px; text-align: center; color: #b0bcc2; font-size: 9.8px; }
.box { height: 20px; display: grid; align-items: center; background: #21343c; margin-right: 3px; border-radius: 2px; }
.strip em, .params em { color: #cdb744; font-weight: 500; }
.box span { display: flex; align-items: center; gap: 3px; }
.box span .ud { margin-left: 3px; }
.ms { width: 16px; height: 15px; margin-right: 1px; background: #2d4049; color: #82939b; text-align: center; line-height: 15px; font-size: 10px; }
.box-name { width: 193px; grid-template-columns: 17px 17px 129.500px 9px 16px; padding-left: 2px; }
.box-name em { padding-left: 4px; }
.box-name .color { width: 15px; height: 14px; background: #644713; justify-content: center; }
.color i { width: 8px; height: 8px; background: #b58b2d; }
.box-vol { width: 212px; grid-template-columns: 54px 48px 80px; padding-left: 11px; }
.box-key { width: 106px; grid-template-columns: 49px 40px; padding-left: 10px; }
.box-vel { width: 112px; grid-template-columns: 63.500px 40px; padding-left: 10px; margin-right: 0; }

.map-body { display: flex; height: 169px; }
.list { width: 230px; height: 169px; overflow: hidden; }
.row { display: flex; height: 17.600px; background: #213037; }
.row:nth-child(odd) { background: #1d2b32; }
.row span { width: 36px; border-right: 1px solid #121c22; text-align: center; line-height: 18px; }
.row div { display: flex; align-items: center; padding-left: 2px; padding-top: 1px; }
.row.first { background: #2d3c4a; }
.row .ms:nth-child(2) { margin-right: 4px; }
.row .ms { background: #364a56; }
.roll { width: 440px; height: 169px; }
.roll text { font-size: 5px; fill: #26343a; font-weight: 600; }

.zone-strip { background: #0e3957; padding-top: 0; }
.zone-strip label { padding-left: 5px; }
.zone-strip .box { background: #0a2d44; }
.box-zone { width: 111px; grid-template-columns: 87px 10px; padding-left: 7px; }
.box-root { width: 179px; grid-template-columns: 74px 62px 29px; padding-left: 10px; }
.box-zvol { width: 113px; grid-template-columns: 54.500px 40px; padding-left: 10px; }
.amber { height: 14px; line-height: 14px; background: #60430f; color: #e0b53a; font-weight: 500; text-align: center; }

.zone { width: 670px; height: 180px; margin: 5px 0 0 2px; background: #0b304a; border-bottom: 1px solid #17507a; border-radius: 3px; overflow: hidden; }
.zone-title { width: 358.500px; padding-left: 236.500px; }
.snap-label { margin-left: 7.500px; width: 30px; }
.snap { display: flex; align-items: center; justify-content: space-between; width: 83px; height: 15px; background: #2a3b44; padding: 0 5px; }
.zoom-label2 { margin-left: 10px; width: 33px; }
.fits { display: flex; gap: 1px; }
.fits div { width: 19px; height: 15px; background: #2a3b44; display: flex; align-items: center; justify-content: center; }
.fits svg { width: 10px; height: 10px; fill: none; stroke: #95a4ab; stroke-width: .9; }
.wave { width: 670px; height: 92px; }
.tick { font-size: 6.5px; fill: #2c6b9a; }
.c1 { font-size: 9px; fill: #4d90c6; }

.params { padding: 2px 2px 0 3px; }
.prow-zone { display: flex; gap: 3px; height: 21px; margin-bottom: 2px; }
.pbox { display: flex; align-items: center; background: #0a2a3f; height: 21px; padding-top: 1px; }
.pbox span { display: flex; align-items: center; gap: 3px; }
.pbox-file { width: 366px; padding-left: 9px; }
.pbox-file span:first-child { width: 159px; }
.pbox-file .chev { margin-left: 1px; }
.pbox-play { width: 133px; padding-left: 5px; }
.pbox-play span { width: 25px; }
.pbox-play .amber { width: 50px; }
.reverse { width: 51px; height: 14px; line-height: 14px; margin-left: 2px; background: #10466a; color: #85b4d0; text-align: center; font-weight: 500; }
.pbox-tempo { width: 160px; padding-left: 4px; }
.flex-icon { width: 16px; height: 14px; background: #12435f; padding: 3px 2px; margin-right: 8px; }
.flex-icon svg { width: 12px; height: 8px; fill: none; stroke: #4f88a6; stroke-width: 1; }
.follow { width: 72px; color: #2b4c60; }
.speed { width: 36px; color: #1d4158; }
.pbox-tempo em { width: 7px; opacity: .75; }
.pbox-tempo .ud { opacity: .7; }
.vals { display: grid; grid-template-columns: 71px 97px 21px 98px 37px 99px 36px 113px 47px 20px; align-items: center; height: 21px; background: #0a2c42; border-bottom: 1px solid #0d3550; }
.vals label { text-align: right; }
.vals em { padding-left: 3px; display: flex; align-items: center; gap: 3px; }
.off label { color: #20455c; margin-left: -10px; }
.vals.off em { color: #85853f; }
.vals.off .ud { stroke: #85853f; }

.body-scroll { position: absolute; left: 687px; top: 256px; width: 6px; height: 216px; border-radius: 3px; background: #37434b; }

footer { display: flex; align-items: center; height: 22px; padding: 0 9px 2px; }
footer svg { width: 5px; height: 8px; margin-top: 5px; fill: none; stroke: #9a9a9a; }
footer b { flex: 1; padding-right: 5px; text-align: center; color: #f2f2f2; font-size: 12.6px; font-weight: 500; }

/* dock */
.dock {
  position: absolute;
  left: 391px;
  top: 665px;
  width: 498px;
  height: 52px;
  display: flex;
  align-items: flex-start;
  padding: 5.500px 0 0 5.800px;
  border: 1px solid rgba(255, 255, 255, .16);
  border-radius: 15px;
  background: rgba(34, 6, 66, .4);
}

.app { position: relative; width: 35px; height: 35px; margin-right: 10.300px; }
.app > svg { width: 35px; height: 35px; }
.running::after { content: ""; position: absolute; left: 16px; top: 41px; width: 3px; height: 3px; border-radius: 50%; background: #a894b8; }
.badge { position: absolute; right: -6px; top: -4px; width: 16px; height: 16px; border-radius: 50%; background: #e0303c; color: #fff; text-align: center; line-height: 16px; font-size: 9px; }
.tip { position: absolute; left: 15px; top: -4px; width: 5px; height: 8px; border: 1px solid #eee; border-top-width: 3px; background: #222; }
.sep { width: 1px; height: 38px; margin: 0 13.500px 0 23px; background: rgba(255, 255, 255, .2); }
.app + .sep { margin-left: 5.500px; }
.thumb { position: relative; width: 40px; height: 32px; margin: 2px 5.100px 0 0; }
.sep + .thumb { margin-left: -1px; }
.thumb > svg:first-child { width: 40px; height: 32px; }
.mini { position: absolute; right: 0; bottom: -2px; width: 13px; height: 13px; }
.trash { margin: -1px 0 0 5.500px; }
.trash svg { width: 30px; height: 38px; }

.cursor { position: absolute; left: 779px; top: 401px; width: 9px; height: 13px; }
</style>
